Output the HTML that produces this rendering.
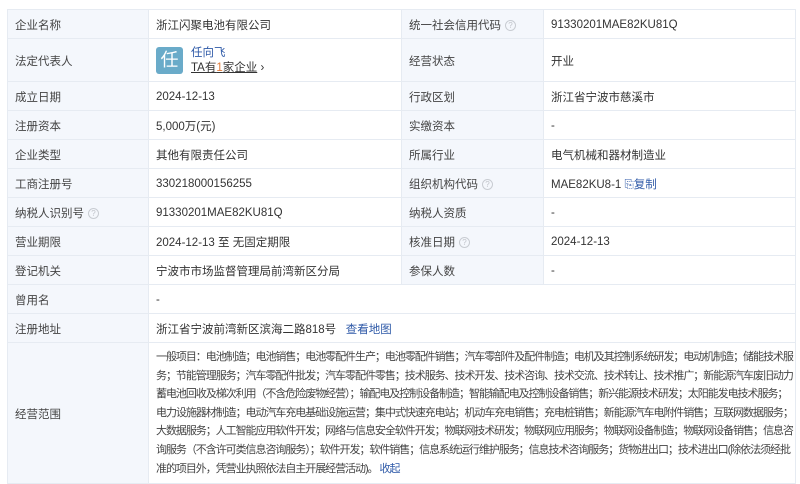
<!DOCTYPE html>
<html><head><meta charset="utf-8"><style>
body{margin:0;background:#fff;font-family:"Liberation Sans","Noto Sans CJK SC",sans-serif;font-size:11.5px;color:#333;}
table{position:absolute;left:7px;top:9px;width:788px;border-collapse:collapse;table-layout:fixed;}
td{border:1px solid #e6ebf2;padding:1px 0 0 7px;vertical-align:middle;height:27px;}
td.l{background:#f4f7fc;color:#444;}
.q{display:inline-block;width:9px;height:9px;border:1px solid #c8ccd2;border-radius:50%;font-size:8px;line-height:9px;text-align:center;color:#c0c4ca;margin-left:4px;vertical-align:1px;}
a{color:#2f5aa8;text-decoration:none;}
.sc{line-height:18.6px;padding:5px 1px 5px 7px;color:#444;font-size:11px;letter-spacing:-1.05px;height:119px;}
</style></head><body>
<table>
<colgroup><col style="width:141px"><col style="width:253px"><col style="width:142px"><col style="width:252px"></colgroup>
<tr><td class="l">企业名称</td><td>浙江闪聚电池有限公司</td><td class="l">统一社会信用代码<span class="q">?</span></td><td>91330201MAE82KU81Q</td></tr>
<tr><td class="l" style="height:41px">法定代表人</td><td><div style="display:flex;align-items:center">
<div style="width:27px;height:27px;background:#6aabc9;border-radius:3px;color:#fff;font-size:18px;line-height:27px;text-align:center;margin-right:8px">任</div>
<div style="line-height:15px"><a>任向飞</a><br><span style="text-decoration:underline">TA有<span style="color:#e07b39">1</span>家企业</span> ›</div></div></td><td class="l">经营状态</td><td>开业</td></tr>
<tr><td class="l">成立日期</td><td>2024-12-13</td><td class="l">行政区划</td><td>浙江省宁波市慈溪市</td></tr>
<tr><td class="l">注册资本</td><td>5,000万(元)</td><td class="l">实缴资本</td><td>-</td></tr>
<tr><td class="l">企业类型</td><td>其他有限责任公司</td><td class="l">所属行业</td><td>电气机械和器材制造业</td></tr>
<tr><td class="l">工商注册号</td><td>330218000156255</td><td class="l">组织机构代码<span class="q">?</span></td><td>MAE82KU8-1 <a>⎘复制</a></td></tr>
<tr><td class="l">纳税人识别号<span class="q">?</span></td><td>91330201MAE82KU81Q</td><td class="l">纳税人资质</td><td>-</td></tr>
<tr><td class="l">营业期限</td><td>2024-12-13 至 无固定期限</td><td class="l">核准日期<span class="q">?</span></td><td>2024-12-13</td></tr>
<tr><td class="l">登记机关</td><td>宁波市市场监督管理局前湾新区分局</td><td class="l">参保人数</td><td>-</td></tr>
<tr><td class="l">曾用名</td><td colspan="3">-</td></tr>
<tr><td class="l">注册地址</td><td colspan="3">浙江省宁波前湾新区滨海二路818号 &nbsp; <a>查看地图</a></td></tr>
<tr><td class="l">经营范围</td><td colspan="3" class="sc">一般项目：电池制造；电池销售；电池零配件生产；电池零配件销售；汽车零部件及配件制造；电机及其控制系统研发；电动机制造；储能技术服务；节能管理服务；汽车零配件批发；汽车零配件零售；技术服务、技术开发、技术咨询、技术交流、技术转让、技术推广；新能源汽车废旧动力蓄电池回收及梯次利用（不含危险废物经营）；输配电及控制设备制造；智能输配电及控制设备销售；新兴能源技术研发；太阳能发电技术服务；电力设施器材制造；电动汽车充电基础设施运营；集中式快速充电站；机动车充电销售；充电桩销售；新能源汽车电附件销售；互联网数据服务；大数据服务；人工智能应用软件开发；网络与信息安全软件开发；物联网技术研发；物联网应用服务；物联网设备制造；物联网设备销售；信息咨询服务（不含许可类信息咨询服务）；软件开发；软件销售；信息系统运行维护服务；信息技术咨询服务；货物进出口；技术进出口(除依法须经批准的项目外，凭营业执照依法自主开展经营活动)。 <a>收起</a></td></tr>
</table>
</body></html>
